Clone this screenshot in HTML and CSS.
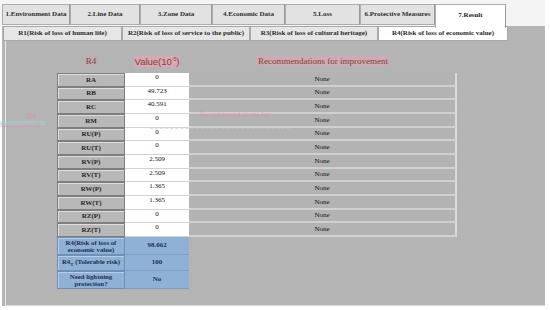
FILE: index.html
```html
<!DOCTYPE html>
<html lang="en">
<head>
    <meta charset="UTF-8">
    <title>Result</title>
    <link rel="stylesheet" href="styles.css">
</head>
<body>
    <div class="tabs">
        <div class="tab t1">1.Environment Data</div>
        <div class="tab t2">2.Line Data</div>
        <div class="tab t3">3.Zone Data</div>
        <div class="tab t4">4.Economic Data</div>
        <div class="tab t5">5.Loss</div>
        <div class="tab t6">6.Protective Measures</div>
        <div class="tab t7 active">7.Result</div>
    </div>
    <div class="panel">
        <div class="subtabs">
            <div class="subtab s1">R1(Risk of loss of human life)</div>
            <div class="subtab s2">R2(Risk of loss of service to the public)</div>
            <div class="subtab s3">R3(Risk of loss of cultural heritage)</div>
            <div class="subtab s4 active">R4(Risk of loss of economic value)</div>
        </div>
        <div class="content">
            <table class="risk">
                <tr class="head">
                    <th class="h-label"><span>R4</span></th>
                    <th class="h-value"><span>Value(10<sup>-5</sup>)</span></th>
                    <th class="h-rec"><span>Recommendations for improvement</span></th>
                </tr>
                <tr><td class="lbl">RA</td><td class="val">0</td><td class="rec">None</td></tr>
                <tr><td class="lbl">RB</td><td class="val">49.723</td><td class="rec">None</td></tr>
                <tr><td class="lbl">RC</td><td class="val">40.591</td><td class="rec">None</td></tr>
                <tr><td class="lbl">RM</td><td class="val">0</td><td class="rec">None</td></tr>
                <tr><td class="lbl">RU(P)</td><td class="val">0</td><td class="rec">None</td></tr>
                <tr><td class="lbl">RU(T)</td><td class="val">0</td><td class="rec">None</td></tr>
                <tr><td class="lbl">RV(P)</td><td class="val">2.509</td><td class="rec">None</td></tr>
                <tr><td class="lbl">RV(T)</td><td class="val">2.509</td><td class="rec">None</td></tr>
                <tr><td class="lbl">RW(P)</td><td class="val">1.365</td><td class="rec">None</td></tr>
                <tr><td class="lbl">RW(T)</td><td class="val">1.365</td><td class="rec">None</td></tr>
                <tr><td class="lbl">RZ(P)</td><td class="val">0</td><td class="rec">None</td></tr>
                <tr><td class="lbl">RZ(T)</td><td class="val">0</td><td class="rec">None</td></tr>
                <tr class="sum tall"><td class="slbl">R4(Risk of loss of<br>economic value)</td><td class="sval">98.062</td><td></td></tr>
                <tr class="sum"><td class="slbl">R4<sub>T</sub> (Tolerable risk)</td><td class="sval">100</td><td></td></tr>
                <tr class="sum tall"><td class="slbl">Need lightning<br>protection?</td><td class="sval">No</td><td></td></tr>
            </table>
        </div>
    </div>

    <!-- leftover paint from a previous header, drawn over the grid -->
    <div class="ghost">
        <span class="g-r4">R4</span>
        <span class="g-mgmt">management</span>
        <span class="g-box"></span>
        <span class="g-rec">Recommendations for</span>
        <span class="g-line"></span>
    </div>
</body>
</html>
```

FILE: styles.css
```css
body {
    margin: 0;
    background: #ffffff;
    font-family: "Liberation Serif", "Times New Roman", serif;
    color: #1a1a1a;
    width: 550px;
    height: 310px;
    overflow: hidden;
    position: relative;
}
.tabs {
    display: flex;
    align-items: flex-start;
    padding: 4px 0 0 2px;
    height: 22px;
    background: #f4f4f4;
    width: 543px;
}
.tab {
    box-sizing: border-box;
    height: 21px;
    line-height: 19px;
    text-align: center;
    font-size: 7px;
    font-weight: bold;
    color: #2e2e2e;
    background: #e2e2e2;
    border: 1px solid #acacac;
    border-right-color: #9a9a9a;
    white-space: nowrap;
}
.tab.active {
    background: #ffffff;
    height: 24px;
    line-height: 20px;
    border-bottom: none;
    position: relative;
    z-index: 2;
    color: #222;
}
.t1 { width: 68px; }
.t2 { width: 70px; }
.t3 { width: 72px; }
.t4 { width: 73px; }
.t5 { width: 75px; }
.t6 { width: 75px; }
.t7 { width: 71px; }

.panel {
    width: 543px;
    margin-left: 2px;
    height: 280px;
    background: #b4b4b4;
    display: flex;
    flex-direction: column;
}
.subtabs {
    display: flex;
    height: 15px;
    padding-left: 1px;
    background: #b4b4b4;
}
.subtab {
    box-sizing: border-box;
    height: 15px;
    line-height: 13px;
    text-align: center;
    font-size: 7px;
    font-weight: bold;
    color: #2a2a2a;
    background: #e6e6e6;
    border: 1px solid #a8a8a8;
    white-space: nowrap;
}
.subtab.active {
    background: #ffffff;
}
.s1 { width: 119px; }
.s2 { width: 128px; }
.s3 { width: 128px; }
.s4 { width: 130px; }

.content {
    flex: 1;
    margin: 0 0 0 3px;
    border-left: 1px solid #ececec;
    border-bottom: 1px solid #dcdcdc;
    padding: 8px 0 0 51px;
}
.risk {
    border-collapse: separate;
    border-spacing: 0;
    font-size: 7px;
    color: #1a1a1a;
}
.risk td, .risk th {
    padding: 0;
    text-align: center;
}
.head th {
    height: 24px;
    font-weight: normal;
    color: #7c4636;
    vertical-align: middle;
}
.head span {
    background: #dba7b4;
    padding: 0 1px;
}
.h-label span {
    background: #c2acb0;
    font-size: 9px;
}
.h-value span {
    font-family: "Liberation Sans", Arial, sans-serif;
    font-size: 9.5px;
}
.h-value sup {
    font-size: 5px;
}
.h-rec {
    padding-right: 12px;
}
.h-rec span {
    font-size: 9px;
    background: #cfa9b3;
}
.lbl {
    box-sizing: border-box;
    width: 68px;
    height: 13.67px;
    background: #b8b8b8;
    border: 1px solid #7e7e7e;
    box-shadow: inset 1px 1px 0 #dedede;
    font-weight: bold;
    color: #262626;
}
.val {
    box-sizing: border-box;
    width: 64px;
    background: #ffffff;
    border-bottom: 1px solid #d2d2d2;
    vertical-align: top;
    line-height: 9px;
    color: #111111;
}
.rec {
    box-sizing: border-box;
    width: 268px;
    background: #b3b3b3;
    border-bottom: 2px solid #d0d0d0;
    border-right: 2px solid #dadada;
    color: #111111;
}
.sum td {
    height: 15px;
}
.sum.tall td {
    height: 17px;
}
.slbl {
    box-sizing: border-box;
    width: 68px;
    background: #8fb1d6;
    border: 1px solid #6f8fb4;
    box-shadow: inset 1px 1px 0 #b5cde8;
    color: #1c2f52;
    font-weight: bold;
    font-size: 6.8px;
    line-height: 7px;
}
.slbl sub {
    font-size: 5px;
}
.sval {
    background: #8fb1d6;
    border-bottom: 1px solid #7d9cc0;
    color: #1c2f52;
    font-weight: bold;
}

.ghost {
    position: absolute;
    left: 0;
    top: 0;
    width: 0;
    height: 0;
    pointer-events: none;
}
.ghost span {
    position: absolute;
    white-space: nowrap;
    color: #f27fa3;
    opacity: 0.55;
    font-size: 8px;
}
.g-r4 {
    left: 27px;
    top: 112px;
}
.g-mgmt {
    left: 0;
    top: 120px;
    width: 46px;
    overflow: hidden;
}
.ghost .g-box {
    left: 0;
    top: 121px;
    width: 46px;
    height: 4px;
    background: #8fe0dc;
    opacity: 0.35;
}
.g-rec {
    left: 200px;
    top: 110px;
    width: 88px;
    overflow: hidden;
}
.ghost .g-line {
    left: 150px;
    top: 128px;
    width: 140px;
    height: 1px;
    border-top: 1px dashed #a9d4cf;
}
```
